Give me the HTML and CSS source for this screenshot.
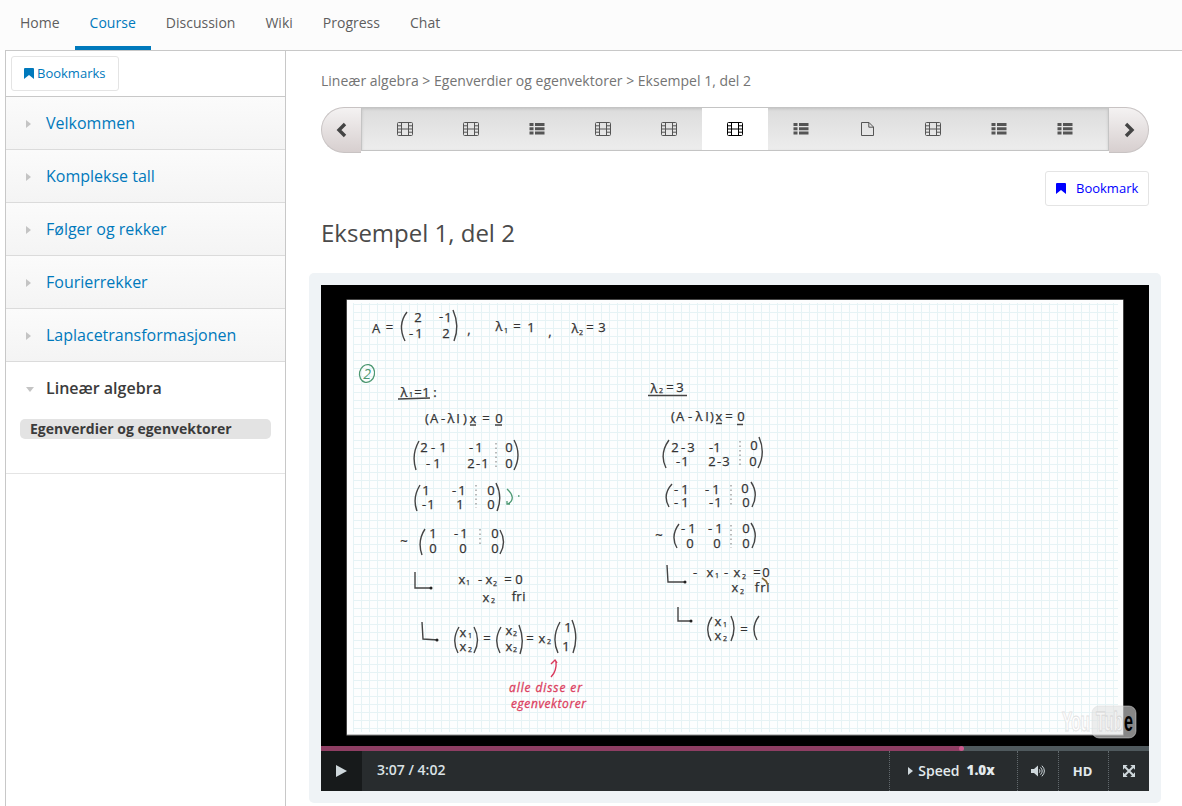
FILE: index.html
```html
<!DOCTYPE html>
<html lang="nb">
<head>
<meta charset="utf-8">
<title>Eksempel 1, del 2</title>
<link rel="stylesheet" href="styles.css">
</head>
<body>
<svg width="0" height="0" class="defs">
  <symbol id="film" viewBox="0 0 16 14">
    <path fill="none" stroke="currentColor" stroke-width="1" d="M1.500.5h13q1 0 1 1v11q0 1-1 1h-13q-1 0-1-1v-11q0-1 1-1zM4.500.5v13M11.500.5v13M4.500 7h7M.5 3.800h4M.5 7h4M.5 10.200h4M11.500 3.800h4M11.500 7h4M11.500 10.200h4"/>
  </symbol>
  <symbol id="list" viewBox="0 0 16 14">
    <path fill="currentColor" d="M.5 1H4.500v3H.5zM6 1h9.500v3H6zM.5 5.200H4.500v3H.5zM6 5.200h9.500v3H6zM.5 9.400H4.500v3H.5zM6 9.400h9.500v3H6z"/>
  </symbol>
  <symbol id="page" viewBox="0 0 16 14">
    <path fill="none" stroke="currentColor" stroke-width="1" d="M2.500.5h7.500l4.500 4.500v8.500h-12zM9.800.5v4.700h4.700"/>
  </symbol>
  <symbol id="mark" viewBox="0 0 10 11">
    <path fill="currentColor" d="M1 0h8q1 0 1 1v10L5 7 0 11V1q0-1 1-1z"/>
  </symbol>
</svg>

<nav class="tabs">
  <a class="tab">Home</a><a class="tab tab-on">Course</a><a class="tab">Discussion</a><a class="tab">Wiki</a><a class="tab">Progress</a><a class="tab">Chat</a>
</nav>

<div class="wrap">
  <aside class="side">
    <div class="side-top"><a class="btn btn-side"><svg width="10" height="11"><use href="#mark"/></svg><span>Bookmarks</span></a></div>
    <a class="chapter"><i class="tri"></i>Velkommen</a>
    <a class="chapter"><i class="tri"></i>Komplekse tall</a>
    <a class="chapter"><i class="tri"></i>Følger og rekker</a>
    <a class="chapter"><i class="tri"></i>Fourierrekker</a>
    <a class="chapter"><i class="tri"></i>Laplacetransformasjonen</a>
    <div class="open">
      <a class="chapter-open"><i class="tri-down"></i>Lineær algebra</a>
      <a class="section">Egenverdier og egenvektorer</a>
    </div>
  </aside>

  <main class="main">
    <div class="crumbs">Lineær algebra &gt; Egenverdier og egenvektorer &gt; Eksempel 1, del 2</div>
    <div class="seq">
      <button class="arrow prev"><svg width="14" height="16" viewBox="0 0 14 16"><path d="M10 2 4 8l6 6"/></svg></button>
      <div class="items">
        <a class="item"><svg width="16" height="14"><use href="#film"/></svg></a>
        <a class="item"><svg width="16" height="14"><use href="#film"/></svg></a>
        <a class="item"><svg width="16" height="14"><use href="#list"/></svg></a>
        <a class="item"><svg width="16" height="14"><use href="#film"/></svg></a>
        <a class="item"><svg width="16" height="14"><use href="#film"/></svg></a>
        <a class="item item-on"><svg width="16" height="14"><use href="#film"/></svg></a>
        <a class="item"><svg width="16" height="14"><use href="#list"/></svg></a>
        <a class="item"><svg width="16" height="14"><use href="#page"/></svg></a>
        <a class="item"><svg width="16" height="14"><use href="#film"/></svg></a>
        <a class="item"><svg width="16" height="14"><use href="#list"/></svg></a>
        <a class="item"><svg width="16" height="14"><use href="#list"/></svg></a>
      </div>
      <button class="arrow next"><svg width="14" height="16" viewBox="0 0 14 16"><path d="M4 2l6 6-6 6"/></svg></button>
    </div>
    <div class="mark-row"><a class="btn btn-mark"><svg width="10" height="11"><use href="#mark"/></svg><span>Bookmark</span></a></div>
    <h1 class="title">Eksempel 1, del 2</h1>

    <div class="video">
      <svg class="frame" width="828" height="461" viewBox="321 285 828 461">
        <defs>
          <pattern id="grid" x="353" y="304" width="8" height="8" patternUnits="userSpaceOnUse"><path class="grid-line" d="M.5 0v8M0 .5h8"/></pattern>
        </defs>
        <rect x="321" y="285" width="828" height="461" fill="#000"/>
        <rect x="346.500" y="299.500" width="777" height="436" fill="#8a8a8a"/>
        <rect x="347" y="300" width="776" height="434.500" fill="#fdfefe"/>
        <rect x="353" y="303" width="765" height="429" fill="url(#grid)"/>

        <g class="ink">
          <text x="376 389.500 418 441 448 411 419 446 469" y="333 332 322 321 322 338 338 338 334">A=2-1-12,</text>
          <text x="499 517 531 550 575 590 602" y="331 331 332 336 333 332 332">λ=1,λ=3</text>
          <text class="sub" x="506" y="333">1</text><text class="sub" x="581" y="335">2</text>
          <text x="404 418 426 435" y="397">λ=1:</text>
          <text class="sub" x="411" y="397">1</text>
          <text x="427 434 443 451 458 465 473 486 499" y="423">(A-λI)x=0</text>
          <text x="424 433 443 471 479 509" y="452">2-1-10</text>
          <text x="428 437 471 478 485 509" y="468">-12-10</text>
          <text x="426 454 462 491" y="495">1-10</text>
          <text x="424 431 460 491" y="509">-110</text>
          <text x="404 433 456 464 495" y="546 538 538 538 538">~1-10</text>
          <text x="433 463 495" y="553">000</text>
          <text x="462 480 489 508 519" y="584">x-x=0</text>
          <text class="sub" x="468" y="585">1</text><text class="sub" x="495" y="586">2</text>
          <text x="486 514 519 524" y="602 601 601 601">xfri</text>
          <text class="sub" x="493" y="603">2</text>
          <text x="463 487 509 530 542 568" y="637 643 635 643 643 632">x=x=x1</text>
          <text x="463 509 566" y="651">xx1</text>
          <text class="sub" x="470" y="638">1</text><text class="sub" x="515" y="636">2</text>
          <text class="sub" x="470" y="652">2</text><text class="sub" x="515" y="652">2</text><text class="sub" x="549" y="644">2</text>

          <text x="654 670 680" y="393 392 392">λ=3</text>
          <text class="sub" x="661" y="393">2</text>
          <text x="673 680 690 699 707 712 719 729 741" y="421">(A-λI)x=0</text>
          <text x="675 683 691 711 717 754" y="452 452 452 452 452 450">2-3-10</text>
          <text x="678 685 712 719 726 753" y="466">-12-30</text>
          <text x="676 685 707 716 745" y="494 494 494 494 493">-1-10</text>
          <text x="676 685 711 718 746" y="507">-1-10</text>
          <text x="659 683 692 710 719 746" y="540 533 533 533 533 533">~-1-10</text>
          <text x="690 717 746" y="548">000</text>
          <text x="695 710 726 737 757 766" y="577">-x-x=0</text>
          <text class="sub" x="717" y="578">1</text><text class="sub" x="744" y="579">2</text>
          <text x="735 757 763 768" y="592">xfri</text>
          <text class="sub" x="742" y="594">2</text>
          <text x="718 744" y="626 634">x=</text><text x="718" y="640">x</text>
          <text class="sub" x="725" y="627">1</text><text class="sub" x="725" y="641">2</text>
        </g>
        <g class="stroke">
          <path d="M407 312Q397 325 405 341M453 310Q460 326 454 341"/>
          <path d="M398 399 430 398M470 425h6M495 425h7M648 395.500h39M716 423.500h6M737 424.500h6"/>
          <path d="M419 441Q411 455 416 470M514 440Q522 455 514 470M420 485Q412 498 417 511M496 483Q503 497 497 511M425 529Q417 541 422 555M500 530Q507 542 500 554"/>
          <path d="M415 572v16h17M422 622l1 17 15 1M667 565l1 17h18M678 607v14h13"/>
          <path d="M459 627Q451 640 458 653M474 627Q481 640 474 653M501 627Q493 640 500 653M519 625Q525 640 520 654M560 622Q551 638 558 653M572 620Q579 637 573 653"/>
          <path d="M669 440Q659 454 666 468M759 437Q766 453 758 468M672 484Q662 495 669 507M751 482Q759 494 752 507M679 524Q670 536 677 548M751 523Q759 535 752 548M712 617Q704 629 711 641M731 616Q737 628 731 641M759 616Q750 628 757 640"/>
        </g>
        <g class="dots"><path d="M496 443v27M476 485v23M480 529v17M740 441v26M731 485v21M731 525v23"/></g>
        <g class="heads"><circle cx="431" cy="588" r="1.500"/><circle cx="437" cy="640" r="1.500"/><circle cx="685" cy="582" r="1.500"/><circle cx="691" cy="621" r="1.500"/></g>
        <g class="green"><ellipse cx="367" cy="373.500" rx="7.500" ry="9" transform="rotate(12 367 373.500)"/><path d="M507 489q10 9 1 15M507 501v3h3M518 496h1.500"/></g>
        <text class="green-text" x="367" y="379">2</text>
        <path class="brush" d="M762 578l4 3 2 4"/>
        <path class="red" d="M551 677q6-6 5-16M551 664l4-4 2 3"/>
        <text class="red-text" x="509" y="692" textLength="73">alle disse er</text>
        <text class="red-text" x="511" y="708" textLength="75">egenvektorer</text>

        <rect x="1092" y="706" width="44" height="32" rx="7" class="logo-box"/>
        <text class="logo-you" x="1062" y="731" textLength="28" lengthAdjust="spacingAndGlyphs">You</text>
        <text class="logo-tube" x="1096" y="731" textLength="27" lengthAdjust="spacingAndGlyphs">Tub</text>
        <text class="logo-e" x="1124" y="731" textLength="9" lengthAdjust="spacingAndGlyphs">e</text>
      </svg>
      <div class="slider"><div class="played"></div><div class="knob"></div></div>
      <div class="controls">
        <button class="play"><svg width="12" height="12"><path d="M0 0 11 6 0 12z"/></svg></button>
        <div class="time">3:07 / 4:02</div>
        <div class="ctl speed"><i class="speed-tri"></i><span>Speed</span><b>1.0x</b></div>
        <div class="ctl vol"><svg width="14" height="12" viewBox="0 0 14 12"><path class="solid" d="M0 4h3l4-3.500v11L3 8H0z"/><path class="wave" d="M8.300 4.300q1.500 1.700 0 3.400M9.500 2.400q3.400 3.600 0 7.200M10.900.7q5 5.300 0 10.600"/></svg></div>
        <div class="ctl hd">HD</div>
        <div class="ctl full"><svg width="12" height="12" viewBox="0 0 12 12"><path class="solid" d="M0 0h4.700L0 4.700zM12 0v4.700L7.300 0zM0 12V7.300L4.700 12zM12 12H7.300L12 7.300z"/><path class="cross" d="M2 2l8 8M10 2l-8 8"/></svg></div>
      </div>
    </div>
  </main>
</div>
</body>
</html>
```
FILE: styles.css
```css
* { box-sizing: border-box; }
body { margin: 0; height: 806px; overflow: hidden; background: #fff; font-family: "Open Sans", sans-serif; color: #4a4a4a; }
.defs { display: none; }
button { border: 0; padding: 0; margin: 0; }

.tabs { display: flex; height: 50px; padding-left: 5px; background: #fcfcfc; font-size: 14px; line-height: 20px; color: #5e5e5e; }
.tab { padding: 13px 15px 0; height: 50px; letter-spacing: .01px; }
.tab-on { color: #0079bc; border-bottom: 4px solid #0079bc; }

.wrap { display: flex; margin-left: 5px; border-top: 1px solid #c8c8c8; height: 756px; }
.side { width: 281px; flex: none; border: solid #c8c8c8; border-width: 0 1px; }
.side-top { height: 46px; padding: 5px; border-bottom: 1px solid #c8c8c8; display: flex; }
.btn { display: flex; align-items: center; border: 1px solid #e4e4e4; border-radius: 3px; height: 35px; font-size: 13px; }
.btn span { padding-bottom: 2px; }
.btn-side { color: #0079bc; width: 108px; padding-left: 12px; gap: 3px; }
.chapter { display: flex; align-items: center; height: 53px; padding-left: 20px; border-bottom: 1px solid #dbdbdb; background: linear-gradient(#fbfbfb, #f4f4f4); color: #0079bc; font-size: 16px; }
.tri { width: 0; height: 0; border: solid transparent; border-width: 4px 0 4px 5px; border-left-color: #c4c4c4; margin: 2px 15px 0 0; }
.open { height: 112px; border-bottom: 1px solid #e4e4e4; display: flex; flex-direction: column; }
.chapter-open { display: flex; align-items: center; height: 52px; padding-left: 20px; font-size: 16px; font-weight: 600; color: #3b3b3b; }
.tri-down { width: 0; height: 0; border: solid transparent; border-width: 5px 4px 0; border-top-color: #c4c4c4; margin: 2px 12px 0 0; }
.section { margin: 5px 14px 0; height: 20px; line-height: 20px; border-radius: 5px; background: #e3e3e3; padding-left: 10px; font-size: 14px; font-weight: 700; color: #3b3b3b; }

.main { flex: 1; padding: 19px 33px 0 35px; }
.crumbs { font-size: 14px; line-height: 22px; color: #747474; letter-spacing: .01px; }
.seq { display: flex; margin-top: 15px; height: 46px; }
.arrow { width: 40px; height: 46px; flex: none; display: flex; align-items: center; justify-content: center; background: linear-gradient(#f4f2f2, #d7cfcf); border: 1px solid #c8c3c3; }
.arrow path { fill: none; stroke: #444; stroke-width: 3.400; }
.prev { border-radius: 23px 0 0 23px; border-right: 0; }
.next { border-radius: 0 23px 23px 0; border-left: 0; }
.items { width: 748px; height: 44px; display: flex; padding: 0 10px; border: 1px solid #c4c4c4; background: linear-gradient(#dcdcdc, #ededed); box-shadow: inset 0 1px 3px rgba(0,0,0,.12); color: #555; }
.item { width: 66px; display: flex; justify-content: center; padding-top: 14px; }
.item-on { background: #fff; color: #000; }
.mark-row { display: flex; justify-content: flex-end; margin-top: 18px; }
.btn-mark { color: #00f; width: 104px; padding-left: 10px; gap: 10px; }
.title { margin: 10px 0 0; font-size: 24px; line-height: 34px; font-weight: 400; color: #4a4a4a; }

.video { margin: 23px -12px 0; height: 530px; padding: 12px; background: #eff3f6; border-radius: 5px; }
.frame { display: block; }
.grid-line { fill: none; stroke: #e6f3f5; stroke-width: 1; }
.ink text { font-size: 13px; text-anchor: middle; fill: #333; stroke: #333; stroke-width: .25; }
.ink .sub { font-size: 7px; }
.stroke path { fill: none; stroke: #444; stroke-width: 1.400; }
.dots path { fill: none; stroke: #777; stroke-dasharray: 1.500 3; }
.heads { fill: #222; }
.green { fill: none; stroke: #4d9872; stroke-width: 1.300; }
.green-text { font-size: 14px; font-style: italic; fill: #4d9872; text-anchor: middle; }
.brush { fill: none; stroke: #8a6a33; stroke-width: 1.800; }
.red { fill: none; stroke: #d9385b; stroke-width: 1.400; }
.red-text { font-size: 12px; font-style: italic; fill: #dc3f60; stroke: #dc3f60; stroke-width: .3; }
.logo-box { fill: rgba(225,225,225,.6); stroke: rgba(220,220,220,.5); }
.logo-you, .logo-tube, .logo-e { font: 700 27px "Liberation Sans", sans-serif; fill: #fff; stroke: #e2e2e2; stroke-width: 1; }
.logo-tube { fill: #f4f4f4; stroke: #d4d4d4; stroke-width: .8; }
.logo-e { fill: #000; stroke: none; }

.slider { position: relative; height: 5px; background: #4f595d; }
.played { width: 640px; height: 5px; background: #8e3e63; }
.knob { position: absolute; left: 638px; top: 0; width: 5px; height: 5px; border-radius: 50%; background: #cb598d; }
.controls { display: flex; height: 40px; background: #282c2e; color: #e3eaed; font-size: 14px; }
.play { width: 41px; background: #171a1b; display: flex; align-items: center; justify-content: center; }
.play path, .solid { fill: #cfd8dc; }
.time { flex: 1; padding-left: 15px; line-height: 38px; font-size: 14px; font-weight: 600; color: #dbe2e5; }
.ctl { display: flex; align-items: center; justify-content: center; border-left: 1px dotted #62696d; height: 40px; }
.speed { width: 128px; padding: 0 4px 2px 0; font-weight: 600; font-size: 14px; }
.speed b { margin-left: 7px; font-size: 13.500px; }
.speed-tri { border: solid transparent; border-width: 4px 0 4px 5px; border-left-color: #cfd8dc; margin: 1px 5px 0 0; }
.vol { width: 41px; }
.wave, .cross { fill: none; stroke: #cfd8dc; stroke-width: 1; }
.hd { width: 50px; padding-right: 2px; font-weight: 700; font-size: 13px; }
.full { width: 41px; }
.cross { stroke-width: 2; }
```
